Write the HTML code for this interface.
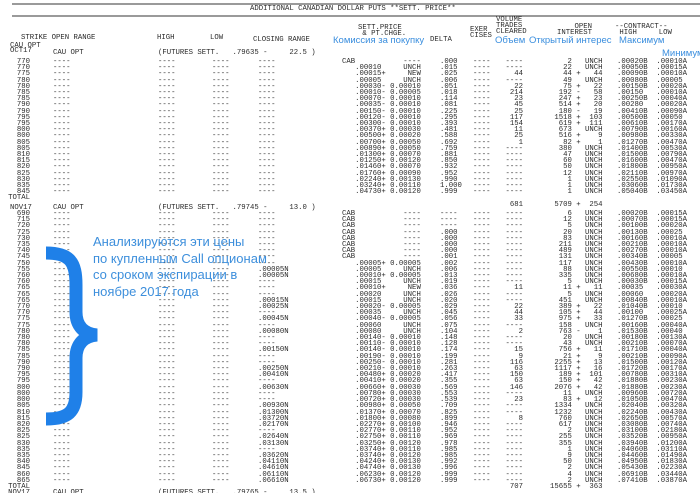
<!DOCTYPE html>
<html><head><meta charset="utf-8"><style>
html,body{margin:0;padding:0;background:#fff;width:700px;height:493px;overflow:hidden;position:relative}
pre,div.t{position:absolute;margin:0;font-family:"Liberation Mono",monospace;font-size:7.3px;line-height:6.2px;color:#2a2a2a;white-space:pre}
.r{text-align:right}
.h{line-height:7px}
.b{position:absolute;font-family:"Liberation Sans","Noto Sans CJK SC",sans-serif;color:#3a8ede;white-space:nowrap}
.ln{position:absolute;left:12px;right:0;height:2px;background:#9a9a9a}
</style></head><body>
<div class="ln" style="top:3px"></div>
<div class="ln" style="top:15px"></div>
<div class="t" style="left:250px;top:6px;line-height:7px">ADDITIONAL CANADIAN DOLLAR PUTS **SETT. PRICE**</div>

<div class="t h" style="left:21px;top:35px">STRIKE OPEN RANGE</div>
<div class="t h" style="left:157px;top:35px">HIGH</div>
<div class="t h" style="left:210px;top:35px">LOW</div>
<div class="t h" style="left:253px;top:37px">CLOSING RANGE</div>
<div class="t h" style="left:358px;top:25px">SETT.PRICE
 &amp; PT.CHGE.</div>
<div class="t h" style="left:430px;top:37px">DELTA</div>
<div class="t h" style="left:470px;top:27px">EXER
CISES</div>
<div class="t h" style="left:496px;top:17px">VOLUME
TRADES
CLEARED</div>
<div class="t h" style="left:557px;top:24px">    OPEN
INTEREST</div>
<div class="t h" style="left:615px;top:24px">--CONTRACT--
 HIGH     LOW</div>

<div class="b" style="left:333px;top:35px;font-size:9.5px">Комиссия за покупку</div>
<div class="b" style="left:495px;top:35px;font-size:9.5px">Объем</div>
<div class="b" style="left:529px;top:35px;font-size:9.5px">Открытый интерес</div>
<div class="b" style="left:619px;top:35px;font-size:9.5px">Максимум</div>
<div class="b" style="left:662px;top:48px;font-size:9.5px">Минимум</div>

<div class="t" style="left:10px;top:44px;line-height:5px">CAU OPT
OCT17</div>
<div class="t" style="left:53px;top:50px">CAU OPT</div>
<div class="t" style="left:158px;top:50px">(FUTURES SETT.   .79635 -     22.5 )</div>
<div class="t" style="left:10px;top:205px">NOV17</div>
<div class="t" style="left:53px;top:205px">CAU OPT</div>
<div class="t" style="left:158px;top:205px">(FUTURES SETT.   .79745 -     13.0 )</div>

<!-- OCT block -->
<pre class="r" style="left:0;width:30px;top:59px">770
770
775
780
780
785
785
790
790
795
795
800
800
805
805
810
815
820
825
830
835
845
TOTAL</pre>
<pre style="left:53px;top:59px">----
----
----
----
----
----
----
----
----
----
----
----
----
----
----
----
----
----
----
----
----
----</pre>
<pre style="left:158px;top:59px">----
----
----
----
----
----
----
----
----
----
----
----
----
----
----
----
----
----
----
----
----
----</pre>
<pre style="left:212px;top:59px">----
----
----
----
----
----
----
----
----
----
----
----
----
----
----
----
----
----
----
----
----
----</pre>
<pre style="left:258px;top:59px">----
----
----
----
----
----
----
----
----
----
----
----
----
----
----
----
----
----
----
----
----
----</pre>
<pre style="left:342px;top:59px">CAB           ----
   .00010     UNCH
   .00015+     NEW
   .00005     UNCH
   .00030- 0.00010
   .00010- 0.00005
   .00070- 0.00010
   .00035- 0.00010
   .00150- 0.00010
   .00120- 0.00010
   .00300- 0.00010
   .00370+ 0.00030
   .00500+ 0.00020
   .00700+ 0.00050
   .00890+ 0.00050
   .01300+ 0.00070
   .01250+ 0.00120
   .01460+ 0.00070
   .01760+ 0.00090
   .02240+ 0.00130
   .03240+ 0.00110
   .04730+ 0.00120</pre>
<pre style="left:440px;top:59px">.000
.015
.025
.006
.051
.018
.114
.081
.225
.295
.393
.481
.588
.692
.759
.881
.850
.932
.952
.990
1.000
.999</pre>
<pre style="left:473px;top:59px">----
----
----
----
----
----
----
----
----
----
----
----
----
----
----
----
----
----
----
----
----
----</pre>
<pre class="r" style="left:490px;width:33px;top:59px">----
----
44
----
22
214
23
45
25
117
154
11
25
1
----
----
----
----
----
----
----
----

681</pre>
<pre style="left:550px;top:59px">    2   UNCH
   22   UNCH
   44 +   44
   49   UNCH
   75 +   22
  192 -   58
  247 +   23
  514 +   20
  180 -   19
 1518 +  103
  619 +  111
  673   UNCH
  516 +    9
   82 +    1
  380   UNCH
   47   UNCH
   60   UNCH
   50   UNCH
   12   UNCH
    1   UNCH
    1   UNCH
    1   UNCH

 5709 +  254</pre>
<pre style="left:617px;top:59px">.00020B  .00010A
.00050B  .00015A
.00090B  .00010A
.00080B  .00005
.00150B  .00020A
.00150   .00010A
.00250B  .00040A
.00280   .00020A
.00410B  .00090A
.00500B  .00050
.00610B  .00170A
.00790B  .00160A
.00980B  .00330A
.01270B  .00470A
.01400B  .00530A
.01500B  .00790A
.01600B  .00470A
.01800B  .00950A
.02110B  .00970A
.02550B  .01090A
.03060B  .01730A
.05040B  .03450A</pre>

<!-- NOV block -->
<pre class="r" style="left:0;width:30px;top:211px">690
715
720
725
730
735
740
745
750
755
760
760
765
765
765
770
770
775
775
780
780
780
785
785
790
790
795
795
800
800
800
805
810
815
820
825
825
830
835
835
840
845
860
865
TOTAL
NOV17</pre>
<pre style="left:53px;top:211px">----
----
----
----
----
----
----
----
----
----
----
----
----
----
----
----
----
----
----
----
----
----
----
----
----
----
----
----
----
----
----
----
----
----
----
----
----
----
----
----
----
----
----
----

CAU OPT</pre>
<pre style="left:158px;top:211px">----
----
----
----
----
----
----
----
----
----
----
----
----
----
----
----
----
----
----
----
----
----
----
----
----
----
----
----
----
----
----
----
----
----
----
----
----
----
----
----
----
----
----
----

(FUTURES SETT.   .79765 -     13.5 )</pre>
<pre style="left:212px;top:211px">----
----
----
----
----
----
----
----
----
----
----
----
----
----
----
----
----
----
----
----
----
----
----
----
----
----
----
----
----
----
----
----
----
----
----
----
----
----
----
----
----
----
----
----</pre>
<pre style="left:258px;top:211px">----
----
----
----
----
----
----
----
----
.00005N
.00005N
----
----
----
.00015N
.00025N
----
.00045N
----
.00080N
----
----
.00150N
----
----
.00250N
.00410N
----
.00630N
----
----
.00930N
.01300N
.03720N
.02170N
----
.02640N
.03130N
----
.03620N
.04110N
.04610N
.06110N
.06610N</pre>
<pre style="left:342px;top:211px">CAB           ----
CAB           ----
CAB           ----
CAB           ----
CAB           ----
CAB           ----
CAB           ----
CAB           ----
   .00005+ 0.00005
   .00005     UNCH
   .00010+ 0.00005
   .00015     UNCH
   .00010+     NEW
   .00020     UNCH
   .00015     UNCH
   .00020- 0.00005
   .00035     UNCH
   .00040- 0.00005
   .00060     UNCH
   .00080     UNCH
   .00140- 0.00010
   .00110- 0.00010
   .00140- 0.00010
   .00190- 0.00010
   .00250- 0.00010
   .00210- 0.00010
   .00480+ 0.00020
   .00410+ 0.00020
   .00660+ 0.00030
   .00780+ 0.00030
   .00720+ 0.00030
   .00980+ 0.00050
   .01370+ 0.00070
   .01800+ 0.00080
   .02270+ 0.00100
   .02770+ 0.00110
   .02750+ 0.00110
   .03250+ 0.00120
   .03740+ 0.00110
   .03740+ 0.00120
   .04240+ 0.00130
   .04740+ 0.00130
   .06230+ 0.00120
   .06730+ 0.00120</pre>
<pre style="left:440px;top:211px">----
----
----
.000
.000
.000
.000
.001
.002
.006
.013
.019
.036
.026
.020
.029
.045
.056
.075
.104
.148
.128
.174
.199
.281
.263
.417
.355
.569
.553
.539
.709
.825
.899
.946
.952
.969
.978
.985
.985
.992
.996
.999
.999</pre>
<pre style="left:473px;top:211px">----
----
----
----
----
----
----
----
----
----
----
----
----
----
----
----
----
----
----
----
----
----
----
----
----
----
----
----
----
----
----
----
----
----
----
----
----
----
----
----
----
----
----
----</pre>
<pre class="r" style="left:490px;width:33px;top:211px">----
----
----
----
----
----
----
----
----
----
----
----
11
----
----
22
44
33
----
2
----
----
15
9
116
63
150
63
146
----
23
----
----
8
----
----
----
----
----
----
----
----
----
----
707</pre>
<pre style="left:550px;top:211px">    6   UNCH
   12   UNCH
    5   UNCH
   20   UNCH
   83   UNCH
  211   UNCH
  489   UNCH
  131   UNCH
  117   UNCH
   88   UNCH
  335   UNCH
    5   UNCH
   11 +   11
    5   UNCH
  451   UNCH
  389 +   22
  105 +   44
  975 +   33
  158   UNCH
  763 -    1
   20   UNCH
   43   UNCH
  756 +   11
   21 +    9
 2255 +   13
 1117 +   16
  189 +  101
  150 +   42
 2076 +   42
   11   UNCH
   83 +   12
 1334   UNCH
 1232   UNCH
  760   UNCH
  617   UNCH
    2   UNCH
  255   UNCH
  355   UNCH
    1   UNCH
    9   UNCH
   50   UNCH
    2   UNCH
    4   UNCH
    2   UNCH
15655 +  363</pre>
<pre style="left:617px;top:211px">.00020B  .00015A
.00070B  .00015A
.00100B  .00020A
.00130B  .00025
.00160B  .00010A
.00210B  .00010A
.00270B  .00010A
.00340B  .00005
.00430B  .00010A
.00550B  .00010
.00680B  .00010A
.00030B  .00015A
.00035   .00030A
.00060   .00020A
.00840B  .00010A
.01040B  .00010
.00100   .00025A
.01270B  .00025
.00160B  .00040A
.01530B  .00040
.00180B  .00130A
.00210B  .00070A
.01710B  .00040A
.00210B  .00090A
.01500B  .00120A
.01720B  .00170A
.00780B  .00310A
.01880B  .00230A
.01880B  .00230A
.00960B  .00720A
.01050B  .00470A
.02040B  .00320A
.02240B  .00430A
.02650B  .00570A
.03080B  .00740A
.03100B  .02180A
.03520B  .00950A
.03940B  .01200A
.04060B  .03110A
.04460B  .01490A
.04950B  .01830A
.05430B  .02230A
.06910B  .03440A
.07410B  .03870A</pre>

<svg style="position:absolute;left:0;top:0" width="700" height="493">
<path d="M46 253 C70 253 76 262 76 285 L76 312 C76 326 84 334 97 335 C84 336 76 344 76 358 L76 392 C76 412 68 419 46 419" fill="none" stroke="#1f80e8" stroke-width="13"/>
</svg>
<div class="b" style="left:93px;top:234px;font-size:13px;line-height:16.5px;color:#3d8fdc">Анализируются эти цены<br>по купленным Call опционам<br>со сроком экспирации в<br>ноябре 2017 года</div>
</body></html>
